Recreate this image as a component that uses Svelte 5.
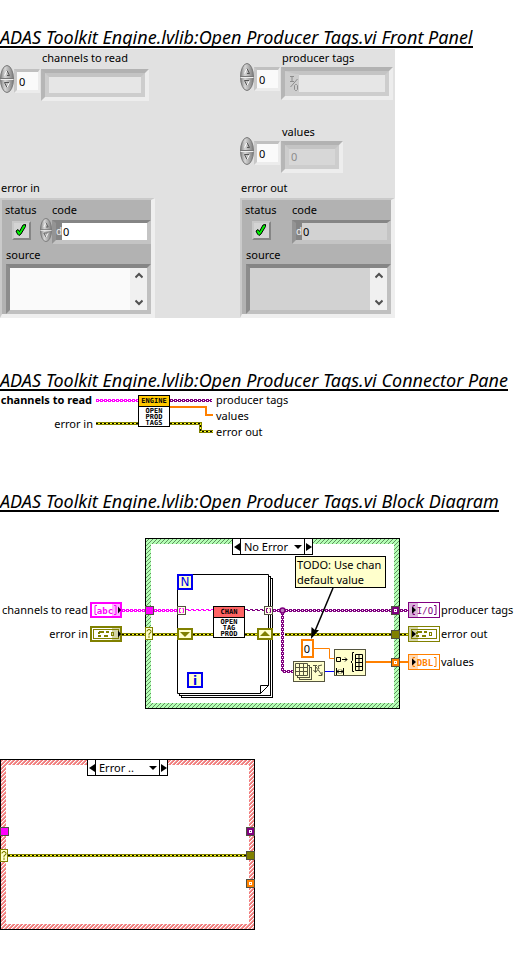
<script>
  let passCase = $state('No Error');
  let failCase = $state('Error ..');
</script>

{#snippet spinner(name)}
  <span class="spinner">
    <svg width="14" height="28" viewBox="0 0 14 28" preserveAspectRatio="none" aria-hidden="true">
      <defs>
        <linearGradient id="metal" x1="0" x2="1" y1="0" y2="0">
          <stop offset="0" stop-color="#868686" />
          <stop offset="0.35" stop-color="#d6d6d6" />
          <stop offset="1" stop-color="#7d7d7d" />
        </linearGradient>
      </defs>
      <ellipse cx="7" cy="14" rx="6.5" ry="13.5" fill="url(#metal)" stroke="#777" />
      <path d="M0.5 13.5H13.5" stroke="#777" />
      <path d="M0.5 14.5H13.5" stroke="#eee" />
      <path d="M4.5 10.5L7 5.5" stroke="#fafafa" fill="none" />
      <path d="M7 5.5L9.5 10.5H7" stroke="#555" fill="none" />
      <path d="M9.5 17.5H4.5L7 22.5" stroke="#555" fill="none" />
      <path d="M7 22.5L9.5 17.5" stroke="#fafafa" fill="none" />
    </svg>
    <button aria-label="Increase {name}"></button>
    <button aria-label="Decrease {name}"></button>
  </span>
{/snippet}

{#snippet array(id, name, kind)}
  <div class="array {kind}">
    <label for={id}>{name}</label>
    <div class="array-row">
      {@render spinner(`${name} index`)}
      <input class="index" value="0" aria-label="{name} index" />
      <span class="element">
        {#if kind === 'io'}
          <svg class="io" width="10" height="18" viewBox="0 0 10 18" aria-hidden="true">
            <path d="M1 2.5H5M3 2.5V7.5M1 7.5H5M1.5 13L8.5 5M5.5 11.5L6.5 10.5H7.5L8.5 11.5V15.5L7.5 16.5H6.5L5.5 15.5Z" fill="none" stroke="#8c8c8c" />
          </svg>
        {/if}
        <input {id} value={kind === 'number' ? '0' : ''} />
      </span>
    </div>
  </div>
{/snippet}

{#snippet cluster(id, name, kind)}
  <div class="cluster-wrap">
    <div class="cluster-name">{name}</div>
    <fieldset class="cluster {kind}" aria-label={name}>
      <div class="status">
        <label for="{id}-status">status</label>
        <span class="led">
          <input type="checkbox" id="{id}-status" checked />
          <svg width="12" height="14" viewBox="0 0 12 14" aria-hidden="true">
            <path d="M1 8L3 6.5L4.5 8.5L8 2L10.5 1.5L10.5 3.5L6 11L4 12.5L2.5 11Z" fill="#00f400" stroke="#000" />
          </svg>
        </span>
      </div>
      <div class="code">
        <label for="{id}-code">code</label>
        <div class="code-row">
          {#if kind === 'control'}{@render spinner('code')}{/if}
          <span class="numeric"><span class="radix">d</span><input id="{id}-code" value="0" /></span>
        </div>
      </div>
      <div class="source">
        <label for="{id}-source">source</label>
        <div class="memo">
          <textarea id="{id}-source"></textarea>
          <div class="scroll">
            <button aria-label="Scroll up"><svg width="8" height="7" viewBox="0 0 8 7"><path d="M0.5 5.5L4 2L7.5 5.5" /></svg></button>
            <button aria-label="Scroll down"><svg width="8" height="7" viewBox="0 0 8 7"><path d="M0.5 1.5L4 5L7.5 1.5" /></svg></button>
          </div>
        </div>
      </div>
    </fieldset>
  </div>
{/snippet}

{#snippet chain(d, color)}
  <path {d} fill="none" stroke={color} stroke-width="3" stroke-dasharray="3 1" />
  <path {d} fill="none" stroke={color} />
  <path {d} fill="none" stroke="#fff" stroke-dasharray="1 3" stroke-dashoffset="-1" />
{/snippet}

{#snippet errorWire(d)}
  <path {d} fill="none" stroke="#808000" stroke-width="3" />
  <path {d} fill="none" stroke="#ffff20" />
  <path {d} fill="none" stroke="#000" stroke-dasharray="2 2" />
{/snippet}

{#snippet stringWire(x, y, w, color)}
  <path d="M{x} {y + 0.5}h{w}" stroke={color} stroke-dasharray="3 2" />
  <path d="M{x + 2} {y + 1.5}h{w - 2}" stroke={color} stroke-dasharray="3 2" />
{/snippet}

{#snippet tunnel(x, y, fill, dot)}
  <rect x={x + 0.5} y={y + 0.5} width="8" height="8" {fill} stroke="#504f40" />
  {#if dot}
    <rect x={x + 3.5} y={y + 3.5} width="2" height="2" fill={fill} stroke="#fff" />
  {/if}
{/snippet}

{#snippet selectorTunnel(x, y)}
  <rect x={x + 0.5} y={y + 0.5} width="7" height="12" fill="#ffffcc" stroke="#808000" />
  <path d="M{x + 2} {y + 4.5}v-1h1v-1h2v1h1v2h-1v1h-1v2M{x + 4} {y + 9}v2" fill="none" stroke="#808000" />
{/snippet}

{#snippet viIcon(x, y, fill, title, lines)}
  <rect x={x + 0.5} y={y + 0.5} width="31" height="31" fill="#fff" stroke="#000" />
  <rect x={x + 0.5} y={y + 0.5} width="31" height="11" {fill} stroke="#000" />
  <text class="pixel" x={x + 16} y={y + 8}>{title}</text>
  {#each lines as line, i}
    <text class="pixel" x={x + 16} y={y + 18 + i * 6}>{line}</text>
  {/each}
{/snippet}

{#snippet clusterGlyph(x, y)}
  <rect x={x + 3.5} y={y + 3.5} width="25" height="9" fill="#fff" stroke="#808000" />
  <path d="M{x + 9} {y + 6}h5M{x + 9} {y + 6}v2M{x + 16} {y + 6}h3M{x + 8} {y + 10}h3M{x + 14} {y + 10}h4" stroke="#808000" stroke-width="2" />
  <rect x={x + 21.5} y={y + 6.5} width="2" height="3" fill="none" stroke="#808000" />
{/snippet}

{#snippet caseSelector(current, options, set)}
  <button class="step" aria-label="Previous case"><svg width="6" height="8" viewBox="0 0 6 8"><path d="M6 0V8L0 4Z" /></svg></button>
  <span class="pick">
    <select aria-label="Case" value={current} onchange={(e) => set(e.currentTarget.value)}>
      {#each options as o}<option>{o}</option>{/each}
    </select>
    <svg width="8" height="4" viewBox="0 0 8 4" aria-hidden="true"><path d="M0 0H8L4 4Z" /></svg>
  </span>
  <button class="step" aria-label="Next case"><svg width="6" height="8" viewBox="0 0 6 8"><path d="M0 0V8L6 4Z" /></svg></button>
{/snippet}

<main>
  <h2>ADAS Toolkit Engine.lvlib:Open Producer Tags.vi Front Panel</h2>
  <section class="panel">
    <div class="column inputs">
      {@render array('channels', 'channels to read', 'text')}
      {@render cluster('error-in', 'error in', 'control')}
    </div>
    <div class="column">
      {@render array('tags', 'producer tags', 'io')}
      {@render array('values', 'values', 'number')}
      {@render cluster('error-out', 'error out', 'indicator')}
    </div>
  </section>

  <h2>ADAS Toolkit Engine.lvlib:Open Producer Tags.vi Connector Pane</h2>
  <section class="connector">
    <svg width="300" height="50" viewBox="0 391 300 50">
      <text class="label bold end" x="92" y="404">channels to read</text>
      <text class="label end" x="93" y="428">error in</text>
      {@render chain('M96 400.500H138', '#ff00ff')}
      {@render errorWire('M96 423.500H138')}
      {@render chain('M170 400.500H212', '#800080')}
      <path d="M170 407H206V415H213" fill="none" stroke="#ff8000" stroke-width="2" />
      {@render errorWire('M170 423.500H200.500V431.500H213')}
      {@render viIcon(138, 395, '#ffc800', 'ENGINE', ['OPEN', 'PROD', 'TAGS'])}
      <text class="label" x="216" y="404">producer tags</text>
      <text class="label" x="216" y="420">values</text>
      <text class="label" x="216" y="436">error out</text>
    </svg>
  </section>

  <h2>ADAS Toolkit Engine.lvlib:Open Producer Tags.vi Block Diagram</h2>
  <section class="diagram">
    <svg width="524" height="171" viewBox="0 538 524 171">
      <defs>
        <pattern id="green" width="4" height="4" patternUnits="userSpaceOnUse">
          <rect width="4" height="4" fill="#b4ffb4" />
          <path d="M0 3h1v1h-1zM1 2h1v1h-1zM2 1h1v1h-1zM3 0h1v1h-1z" fill="#5f8f5f" shape-rendering="crispEdges" />
        </pattern>
      </defs>
      <rect x="145.5" y="538.5" width="254" height="170" fill="url(#green)" stroke="#000" />
      <rect x="151" y="544" width="243" height="159" fill="#fff" />

      <g fill="#fff" stroke="#000">
        <rect x="181.500" y="578.500" width="91" height="119" />
        <rect x="179.500" y="576.500" width="91" height="119" />
        <path d="M177.500 574.500H268.500V685.500L260.500 693.500H177.500Z" />
        <path d="M268.500 685.500H260.500V693.500Z" />
      </g>

      <text class="label end" x="88" y="614">channels to read</text>
      <text class="label end" x="88" y="638">error in</text>
      {@render chain('M122 610.500H145', '#ff00ff')}
      {@render chain('M154 610.500H177', '#ff00ff')}
      {@render stringWire(186, 609, 27, '#ff00ff')}
      {@render stringWire(245, 609, 19, '#800080')}
      {@render chain('M273 610.500H391', '#800080')}
      {@render chain('M400 610.500H408', '#800080')}
      {@render errorWire('M122 634.500H145')}
      {@render errorWire('M153 634.500H213')}
      {@render errorWire('M245 634.500H280')}
      {@render errorWire('M285 634.500H391')}
      {@render errorWire('M400 634.500H408')}
      {@render chain('M282.500 612V671.500H293', '#800080')}
      <circle cx="282.500" cy="610.500" r="2.500" fill="#c080c0" stroke="#800080" stroke-width="1.500" />

      <rect x="91" y="603" width="30" height="14" fill="#fff" stroke="#ff00ff" stroke-width="2" />
      <rect x="112" y="604" width="8" height="12" fill="#ffb3ff" />
      <path d="M97 605.500h-2v9h2M114 605.500h2v9h-2" fill="none" stroke="#ff00ff" />
      <text class="type" x="105" y="614" fill="#ff00ff">abc</text>
      <path d="M118 606.500V613.500L121 610Z" />
      <rect x="91" y="627" width="30" height="14" fill="#fff" stroke="#808000" stroke-width="2" />
      {@render clusterGlyph(90, 626)}
      <rect x="112" y="628" width="8" height="12" fill="#808000" opacity="0.35" />
      <path d="M118 630.500V637.500L121 634Z" />

      {@render tunnel(145, 606, '#ff00ff', false)}
      {@render selectorTunnel(145, 627)}
      {@render tunnel(177, 606, '#ffffe6', false)}
      <path d="M181 608.500h-1.500v4h1.500M182.500 608.500h1v4h-1" fill="none" stroke="#ff00ff" />
      {@render tunnel(264, 606, '#ffffe6', false)}
      <path d="M268 608.500h-1.500v4h1.500M269.500 608.500h1v4h-1" fill="none" stroke="#800080" />

      <rect x="178" y="629" width="14" height="10" fill="#ffffcc" stroke="#808000" stroke-width="2" />
      <path d="M180 632H190L185 637Z" fill="#808000" />
      <rect x="258" y="629" width="14" height="10" fill="#ffffcc" stroke="#808000" stroke-width="2" />
      <path d="M260 636H270L265 631Z" fill="#808000" />

      <rect x="178" y="575" width="14" height="14" fill="#ffffcc" stroke="#0000f0" stroke-width="2" />
      <text class="loop" x="185" y="586">N</text>
      <rect x="188" y="673" width="14" height="14" fill="#ffffcc" stroke="#0000f0" stroke-width="2" />
      <text class="loop bold" x="195" y="685">i</text>

      {@render viIcon(213, 606, '#ff6464', 'CHAN', ['OPEN', 'TAG', 'PROD'])}

      <path d="M314 648.500H329.500V658.500H334" fill="none" stroke="#ff8000" />
      <path d="M324 671.500H334" stroke="#0000ff" />
      <path d="M366 662H391M400 662H408" stroke="#ff8000" stroke-width="2" />
      <rect x="302" y="640" width="11" height="17" fill="#fff" stroke="#ff8000" stroke-width="2" />
      <text class="label mid" x="307" y="653">0</text>

      <rect x="293.500" y="661.500" width="31" height="20" fill="#ffffcc" stroke="#55553f" />
      <g fill="#ffffcc" stroke="#55553f">
        <rect x="299.500" y="667.500" width="12" height="12" />
        <rect x="297.500" y="665.500" width="12" height="12" />
        <path d="M295.500 663.500h12v12h-12zM299.500 663.500v12M303.500 663.500v12M295.500 667.500h12M295.500 671.500h12" />
        <path d="M313 665.500h4M315.500 665v7M313.500 670l2 2.500l2-2.500M316 667l6 8M318.500 675.500h3.500v-3.500M318 666l4 -1M318 666l1 3" fill="none" />
      </g>

      <rect x="334.500" y="649.500" width="31" height="26" fill="#ffffcc" stroke="#55553f" />
      <g fill="none" stroke="#000">
        <path d="M336.500 657.500h4v4h-4zM342 659.500h5M345 657.500l2 2l-2 2M336.500 668v7M343.500 668v7M337 671.500h6M339 669.500l-2 2l2 2M341 669.500l2 2l-2 2" />
        <path d="M354 652.500h-1.500v8l-1.500 1.500l1.500 1.500v8h1.500" />
        <path d="M355.500 654.500h7v16h-7zM359 654.500v16M355.500 658.500h7M355.500 662.500h7M355.500 666.500h7" />
      </g>

      <rect x="295.500" y="556.500" width="90" height="31" fill="#ffffcc" stroke="#000" />
      <text class="label" x="297" y="569">TODO: Use chan</text>
      <text class="label" x="297" y="584">default value</text>
      <path d="M333 588L315 631" stroke="#000" stroke-width="1.500" />
      <path d="M311 639L311.500 627L315 630L319 630Z" />

      {@render tunnel(391, 606, '#800080', true)}
      {@render tunnel(391, 630, '#808000', false)}
      {@render tunnel(391, 658, '#ff8000', true)}

      <rect x="408.500" y="602.500" width="31" height="15" fill="#fff" stroke="#800080" />
      <rect x="409" y="603" width="9" height="14" fill="#d9b3d9" />
      <path d="M415 605.500h-2v9h2M434 605.500h2v9h-2" fill="none" stroke="#800080" />
      <text class="type plain" x="425" y="614" fill="#800080">I/O</text>
      <path d="M412 606.500V613.500L416 610Z" />
      <rect x="408.500" y="626.500" width="31" height="15" fill="#fff" stroke="#808000" />
      {@render clusterGlyph(408, 626)}
      <rect x="409" y="627" width="9" height="14" fill="#808000" opacity="0.35" />
      <path d="M412 630.500V637.500L416 634Z" />
      <rect x="408.500" y="654.500" width="31" height="15" fill="#fff" stroke="#ff8000" />
      <rect x="409" y="655" width="9" height="14" fill="#ffd9b3" />
      <path d="M415 657.500h-2v9h2M434 657.500h2v9h-2" fill="none" stroke="#ff8000" />
      <text class="type" x="425" y="666" fill="#ff8000">DBL</text>
      <path d="M412 658.500V665.500L416 662Z" />

      <text class="label" x="441" y="614">producer tags</text>
      <text class="label" x="441" y="638">error out</text>
      <text class="label" x="441" y="666">values</text>
    </svg>
    <div class="case pass">{@render caseSelector(passCase, ['No Error', 'Error ..'], (v) => (passCase = v))}</div>
  </section>

  <section class="diagram">
    <svg width="255" height="171" viewBox="0 759 255 171">
      <defs>
        <pattern id="red" width="4" height="4" patternUnits="userSpaceOnUse">
          <rect width="4" height="4" fill="#f47c7c" />
          <path d="M0 3h1v1h-1zM1 2h1v1h-1zM2 1h1v1h-1zM3 0h1v1h-1z" fill="#fff" shape-rendering="crispEdges" />
          <path d="M0 0h1v1h-1zM1 3h1v1h-1zM2 2h1v1h-1zM3 1h1v1h-1z" fill="#e8b4b4" shape-rendering="crispEdges" />
        </pattern>
      </defs>
      <rect x="0.500" y="759.500" width="254" height="170" fill="url(#red)" stroke="#000" />
      <rect x="6" y="765" width="243" height="159" fill="#fff" />
      {@render errorWire('M8 855.500H246')}
      {@render tunnel(0, 827, '#ff00ff', false)}
      {@render selectorTunnel(0, 849)}
      {@render tunnel(246, 827, '#800080', true)}
      {@render tunnel(246, 851, '#808000', false)}
      {@render tunnel(246, 879, '#ff8000', true)}
    </svg>
    <div class="case fail">{@render caseSelector(failCase, ['Error ..', 'No Error'], (v) => (failCase = v))}</div>
  </section>
</main>

<style>
  :global(body) {
    margin: 0;
    background: #fff;
    overflow-x: hidden;
  }
  main {
    padding: 28px 0 50px;
    font: 11px/18px 'Noto Sans', 'Open Sans', sans-serif;
    color: #000;
  }
  main :global(*) {
    box-sizing: border-box;
  }
  svg {
    display: block;
  }
  h2 {
    width: fit-content;
    height: 20px;
    margin: 0;
    border-bottom: 2px solid #000;
    font: italic 18px/18px 'Noto Sans', 'Open Sans', sans-serif;
    white-space: nowrap;
  }
  /* Sections cover the heading descenders that reach below the rule. */
  section {
    position: relative;
    background: #fff;
  }
  input,
  textarea,
  select,
  button {
    margin: 0;
    padding: 0;
    border: 0;
    border-radius: 0;
    background: none;
    color: inherit;
    font: inherit;
    appearance: none;
    outline: none;
    min-width: 0;
  }

  .panel {
    display: flex;
    max-width: 395px;
    height: 270px;
    margin-bottom: 53px;
    border-top: 1px solid #fff;
    background: #e1e1e1;
  }
  .column {
    display: flex;
    flex-direction: column;
    flex: 0 0 155px;
  }
  .inputs {
    flex: 1 1 240px;
  }
  .array {
    height: 74px;
  }
  .number {
    height: 56px;
  }
  .array label {
    display: block;
    padding-left: 42px;
  }
  .text .array-row {
    margin-top: 2px;
  }
  .array-row,
  .code-row {
    display: flex;
    align-items: flex-start;
  }
  .spinner {
    position: relative;
    flex: none;
    display: grid;
    width: 14px;
    height: 28px;
    margin-top: -4px;
  }
  .spinner svg {
    position: absolute;
    inset: 0;
    width: 100%;
    height: 100%;
  }
  .spinner button {
    position: relative;
  }
  .index {
    width: 26px;
    height: 24px;
    padding-left: 2px;
    border: solid;
    border-width: 3px 2px 3px 3px;
    border-color: #c0c0c0 #ececec #ececec #c8c8c8;
    background: #fafafa;
  }
  .element {
    display: flex;
    width: 108px;
    height: 32px;
    margin-left: 1px;
    border: solid;
    border-width: 4px;
    border-color: #b2b2b2 #ededed #ededed #b6b6b6;
  }
  .element input {
    flex: 1;
    border: 4px solid #cdcdcd;
    border-top-color: #c4c4c4;
    background: #e6e6e6;
  }
  .io .element {
    position: relative;
    width: 112px;
    height: 33px;
  }
  svg.io {
    position: absolute;
    left: 4px;
    top: 3px;
    background: #cdcdcd;
  }
  .io .element input {
    border-left-width: 14px;
  }
  .number .element {
    width: 62px;
  }
  .number .element input {
    padding-left: 2px;
    background: #d7d7d7;
    color: #8c8c8c;
  }

  .inputs .cluster-wrap {
    margin-top: 56px;
  }
  .cluster-name {
    height: 19px;
    padding-left: 1px;
  }
  .cluster {
    display: grid;
    grid-template-columns: 38px minmax(0, 1fr);
    grid-template-rows: 44px minmax(0, 1fr);
    width: 155px;
    height: 120px;
    min-width: 0;
    margin: 0;
    padding: 0;
    border: solid;
    border-width: 2px 4px 4px 2px;
    border-color: #cacaca #efefef #efefef #cacaca;
    background: #b2b2b2;
  }
  .cluster label {
    display: block;
    height: 20px;
    line-height: 20px;
  }
  .status {
    padding-left: 3px;
  }
  .led {
    position: relative;
    display: block;
    width: 19px;
    height: 19px;
    margin: 1px 0 0 7px;
  }
  .led input {
    display: block;
    width: 19px;
    height: 19px;
    border: 2px solid;
    border-color: #c8c8c8 #858585 #858585 #c8c8c8;
    background: #d4d4d4;
  }
  .led svg {
    position: absolute;
    left: 3px;
    top: 2px;
    pointer-events: none;
  }
  .code label {
    padding-left: 12px;
  }
  .code .spinner {
    width: 12px;
    height: 24px;
    margin-top: -2px;
  }
  .numeric {
    flex: 1;
    display: flex;
    min-width: 0;
    height: 24px;
    border: solid;
    border-width: 3px 4px 4px 4px;
    border-color: #858585 #c4c4c4 #c4c4c4 #949494;
    background: #fff;
  }
  .indicator .numeric {
    margin-left: 12px;
  }
  .radix {
    flex: none;
    width: 6px;
    background: #858585;
    color: #f0f0f0;
    font-size: 10px;
    line-height: 17px;
  }
  .numeric input {
    flex: 1;
    width: 0;
    padding-left: 1px;
  }
  .source {
    grid-column: 1 / -1;
    padding: 2px 0 0 4px;
  }
  .source label {
    height: 18px;
    line-height: 18px;
  }
  .memo {
    display: flex;
    height: 50px;
    border: solid;
    border-width: 4px;
    border-color: #858585 #c0c0c0 #c0c0c0 #8c8c8c;
    background: #fafafa;
  }
  .memo textarea {
    flex: 1;
    width: 0;
    resize: none;
  }
  .scroll {
    display: flex;
    flex-direction: column;
    justify-content: space-between;
    width: 17px;
    background: #f0f0f0;
  }
  .scroll button {
    display: grid;
    place-items: center;
    height: 15px;
  }
  .scroll path {
    fill: none;
    stroke: #505050;
    stroke-width: 2;
  }
  .indicator .numeric,
  .indicator .memo {
    background: #d2d2d2;
  }

  .connector {
    height: 101px;
  }
  .diagram {
    padding-top: 26px;
  }
  .diagram + .diagram {
    margin-top: 24px;
  }
  .label {
    font-size: 11px;
  }
  .bold {
    font-weight: 700;
  }
  .end {
    text-anchor: end;
  }
  .mid {
    text-anchor: middle;
  }
  .pixel {
    font: bold 7px 'DejaVu Sans Mono', monospace;
    text-anchor: middle;
  }
  .type {
    font: bold 9px 'DejaVu Sans Mono', monospace;
    text-anchor: middle;
  }
  .plain {
    font-weight: 400;
  }
  .loop {
    font-family: 'DejaVu Sans', sans-serif;
    font-size: 12px;
    fill: #0000f0;
    text-anchor: middle;
  }
  .case {
    position: absolute;
    top: 26px;
    display: flex;
    width: 81px;
    height: 17px;
    border: 1px solid #000;
    background: #fff;
  }
  .pass {
    left: 232px;
  }
  .fail {
    left: 87px;
  }
  .step {
    display: grid;
    place-items: center;
    width: 7px;
  }
  .pick {
    position: relative;
    flex: 1;
    display: flex;
    border: solid #000;
    border-width: 0 1px;
  }
  .pick select {
    width: 100%;
    padding-left: 3px;
    line-height: 15px;
  }
  .pick svg {
    position: absolute;
    right: 2px;
    top: 6px;
    pointer-events: none;
  }
</style>
